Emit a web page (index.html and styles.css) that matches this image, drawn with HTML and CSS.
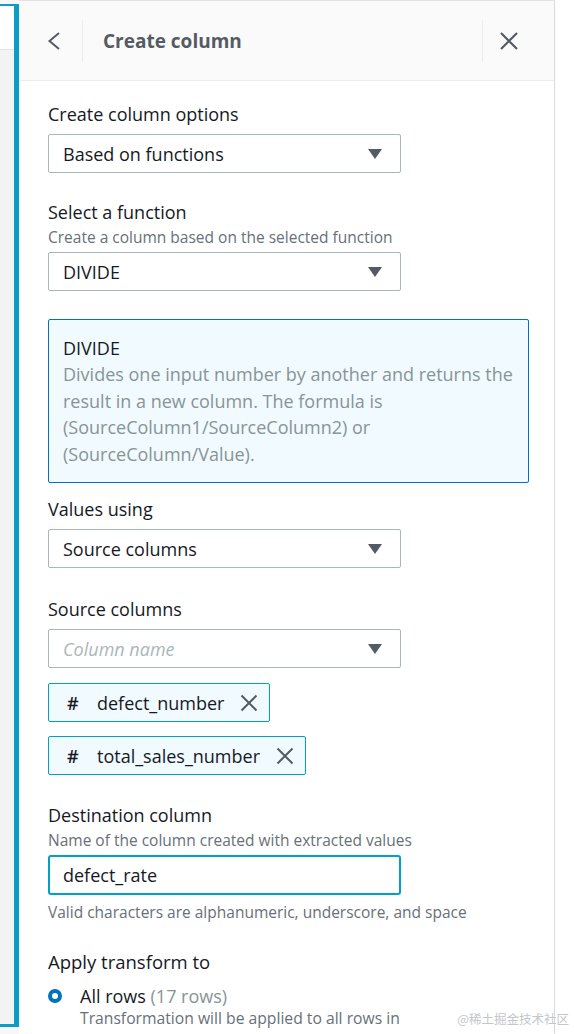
FILE: index.html
```html
<!DOCTYPE html>
<html>
<head>
<meta charset="utf-8">
<link rel="stylesheet" href="styles.css">
</head>
<body>
<div class="page">
  <div class="strip">
    <div class="strip-box">
      <div class="strip-top"></div>
      <div class="strip-rest"></div>
    </div>
  </div>
  <div class="panel">
    <div class="header">
      <div class="hbtn back">
        <svg width="14" height="20" viewBox="0 0 14 20"><path d="M12 2 L2.5 10 L12 18" fill="none" stroke="#545b64" stroke-width="2"/></svg>
      </div>
      <div class="title">Create column</div>
      <div class="hbtn close">
        <svg width="20" height="20" viewBox="0 0 20 20"><path d="M2 2 L18 18 M18 2 L2 18" fill="none" stroke="#545b64" stroke-width="2.2"/></svg>
      </div>
    </div>
    <div class="content">
      <div class="field">
        <div class="label">Create column options</div>
        <div class="select"><span>Based on functions</span><i class="caret"></i></div>
      </div>
      <div class="field">
        <div class="label">Select a function</div>
        <div class="desc">Create a column based on the selected function</div>
        <div class="select"><span>DIVIDE</span><i class="caret"></i></div>
      </div>
      <div class="info">
        <div class="info-title">DIVIDE</div>
        <div class="info-text">Divides one input number by another and returns the result in a new column. The formula is (SourceColumn1/SourceColumn2) or (SourceColumn/Value).</div>
      </div>
      <div class="field values">
        <div class="label">Values using</div>
        <div class="select"><span>Source columns</span><i class="caret"></i></div>
      </div>
      <div class="field">
        <div class="label">Source columns</div>
        <div class="select"><span class="ph">Column name</span><i class="caret"></i></div>
        <div class="tokens">
          <div class="token"><span class="hash">#</span><span class="tname">defect_number</span>
            <svg class="tx" width="18" height="18" viewBox="0 0 18 18"><path d="M1.5 1.5 L16.5 16.5 M16.5 1.5 L1.5 16.5" fill="none" stroke="#545b64" stroke-width="2"/></svg></div>
          <div class="token"><span class="hash">#</span><span class="tname">total_sales_number</span>
            <svg class="tx" width="18" height="18" viewBox="0 0 18 18"><path d="M1.5 1.5 L16.5 16.5 M16.5 1.5 L1.5 16.5" fill="none" stroke="#545b64" stroke-width="2"/></svg></div>
        </div>
      </div>
      <div class="field dest">
        <div class="label">Destination column</div>
        <div class="desc">Name of the column created with extracted values</div>
        <div class="input">defect_rate</div>
        <div class="hint">Valid characters are alphanumeric, underscore, and space</div>
      </div>
      <div class="field apply">
        <div class="label big">Apply transform to</div>
        <div class="radio-row">
          <span class="radio"></span>
          <div class="radio-body">
            <div class="radio-label">All rows <span class="muted">(17 rows)</span></div>
            <div class="radio-desc">Transformation will be applied to all rows in the dataset.</div>
          </div>
        </div>
      </div>
    </div>
  </div>
  <div class="gutter"></div>
</div>
<div class="watermark">@稀土掘金技术社区</div>
</body>
</html>
```

FILE: styles.css
```css
* { box-sizing: border-box; }
html, body { margin: 0; padding: 0; }
body {
  width: 574px;
  height: 1034px;
  overflow: hidden;
  background: #ffffff;
  font-family: "Open Sans", "Noto Sans", sans-serif;
  color: #16191f;
  position: relative;
}
.page {
  display: flex;
  height: 1034px;
}
.strip {
  width: 19px;
  flex: none;
  padding: 4px 0 7px 0;
  background: #f7f7f7;
}
.strip-box {
  height: 100%;
  border-top: 2px solid #0a9dc5;
  border-right: 5px solid #0a9dc5;
  border-bottom: 3px solid #0a9dc5;
  display: flex;
  flex-direction: column;
}
.strip-top { height: 44px; background: #ffffff; border-bottom: 1px solid #e4e4e4; }
.strip-rest { flex: 1; background: #f2f3f3; }

.panel {
  width: 536px;
  flex: none;
  border-right: 1px solid #d5dbdb;
  border-top: 1px solid #e3e3e3;
  display: flex;
  flex-direction: column;
}
.header {
  height: 80px;
  flex: none;
  background: #fafafa;
  border-bottom: 1px solid #eaeded;
  display: flex;
  align-items: center;
}
.hbtn {
  height: 42px;
  display: flex;
  align-items: center;
}
.back { width: 64px; border-right: 1px solid #eaeded; justify-content: center; }
.back svg { margin-left: 6px; }
.close { width: 72px; border-left: 1px solid #eaeded; padding-left: 16px; }
.title {
  flex: 1;
  padding-left: 20px;
  font-weight: 700;
  font-size: 19px;
  color: #545b64;
}
.content {
  padding: 22px 25px 0 29px;
  display: flex;
  flex-direction: column;
}
.field { margin-bottom: 28px; }
.field.values { margin-bottom: 30px; }
.label {
  font-size: 18px;
  line-height: 22px;
  color: #16191f;
  margin-bottom: 9px;
}
.desc {
  font-size: 15.5px;
  line-height: 20px;
  color: #687078;
  margin-top: -5px;
  margin-bottom: 5px;
}
.select {
  width: 353px;
  height: 39px;
  border: 1px solid #aab7b8;
  border-radius: 2px;
  display: flex;
  align-items: center;
  justify-content: space-between;
  padding: 0 18px 0 14px;
  font-size: 18px;
  color: #16191f;
}
.ph { font-style: italic; color: #aab7b8; }
.caret {
  width: 0; height: 0;
  border-left: 7px solid transparent;
  border-right: 7px solid transparent;
  border-top: 10px solid #545b64;
}
.info {
  width: 481px;
  background: #f1faff;
  border: 1px solid #0073bb;
  border-radius: 2px;
  padding: 16px 6px 15px 14px;
  margin-bottom: 15px;
}
.info-title { font-size: 18px; line-height: 24px; color: #16191f; margin-bottom: 1px; }
.info-text { font-size: 18px; line-height: 26.5px; color: #879596; }
.tokens { display: flex; flex-direction: column; align-items: flex-start; gap: 14px; margin-top: 15px; }
.token {
  height: 39px;
  background: #f1faff;
  border: 1px solid #00a1c9;
  border-radius: 2px;
  display: flex;
  align-items: center;
  padding: 0 11px 0 18px;
  font-size: 18px;
}
.hash { width: 30px; font-size: 18px; font-weight: 600; color: #16191f; }
.tname { margin-right: 16px; }
.dest { margin-top: 1px; margin-bottom: 29px; }
.input {
  width: 353px;
  height: 40px;
  border: 2px solid #00a1c9;
  border-radius: 3px;
  display: flex;
  align-items: center;
  padding-left: 13px;
  font-size: 18px;
}
.hint { font-size: 15.5px; line-height: 20px; color: #687078; margin-top: 7px; }
.label.big { font-size: 18.5px; margin-bottom: 12px; }
.radio-row { display: flex; gap: 18px; align-items: flex-start; }
.radio {
  width: 14px; height: 14px;
  border-radius: 50%;
  border: 4px solid #0073bb;
  background: #fff;
  margin-top: 4px;
  flex: none;
}
.radio-label { font-size: 18px; line-height: 22px; }
.muted { color: #879596; }
.radio-desc { font-size: 15.7px; line-height: 22px; color: #687078; width: 335px; }
.gutter { flex: 1; background: #ffffff; }
.watermark {
  position: absolute;
  right: 5px;
  bottom: 6px;
  font-family: "Noto Sans CJK SC", sans-serif;
  font-size: 12.5px;
  color: #c4c7ca;
}
```
